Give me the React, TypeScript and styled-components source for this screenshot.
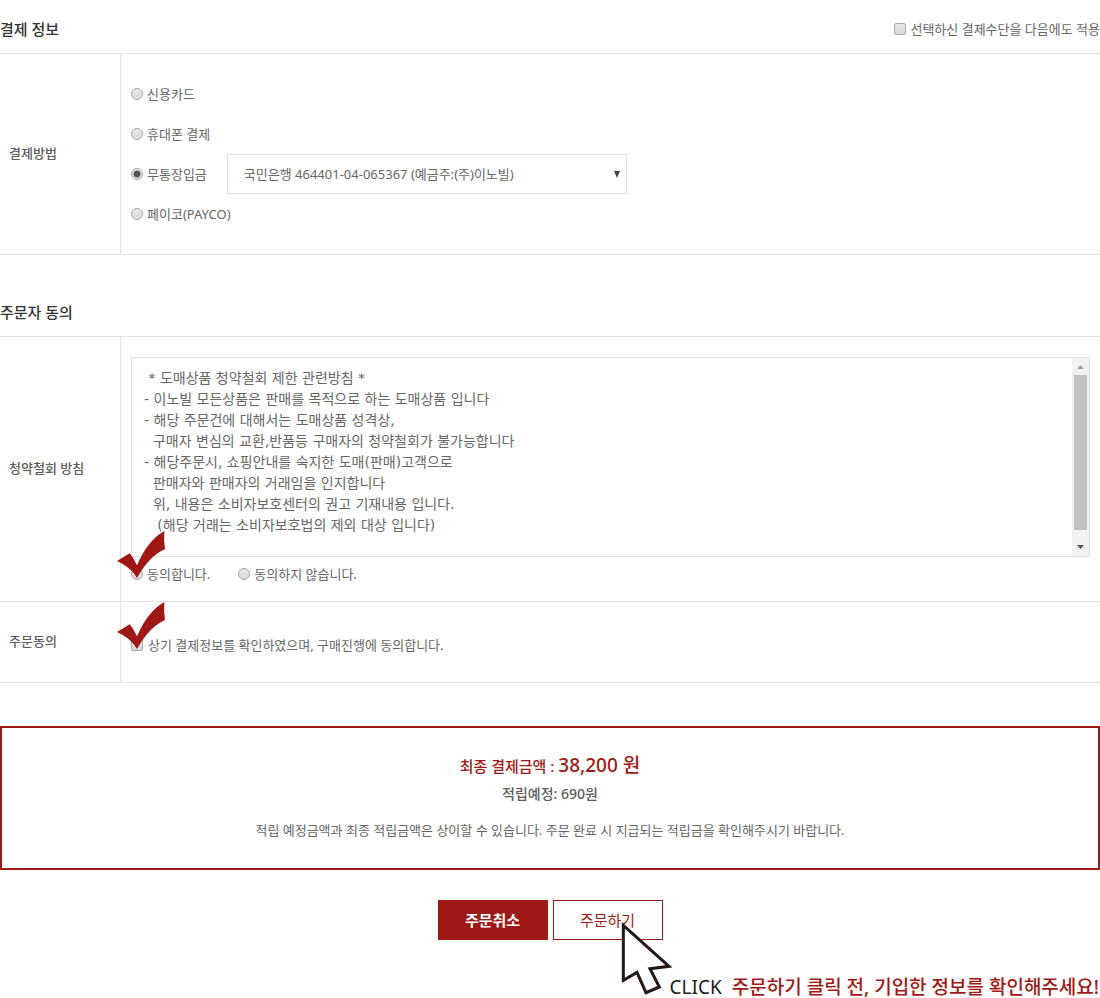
import React from 'react';
import styled, { createGlobalStyle, css } from 'styled-components';

const RED = '#9e1915';
const LINE = '#e2e2e2';

const GlobalStyle = createGlobalStyle`
  *, *::before, *::after { box-sizing: border-box; }
  body {
    margin: 0;
    background: #fff;
    color: #666;
    font: 400 13px/20px "Noto Sans", "Noto Sans CJK KR", sans-serif;
  }
  button, select, textarea { font: inherit; color: inherit; }
`;

const Page = styled.main`
  display: flow-root;
`;

const SectionHeader = styled.header<{ $spaced?: boolean }>`
  display: flex;
  justify-content: space-between;
  align-items: center;
  height: 53px;
  padding-top: 5px;
  margin-top: ${(p) => (p.$spaced ? 28 : 0)}px;
`;

const Title = styled.h2`
  margin: 0;
  font-size: 15px;
  font-weight: 500;
  color: #333;
`;

const FormTable = styled.table`
  width: 100%;
  border-collapse: separate;
  border-spacing: 0;
  border-top: 1px solid ${LINE};
`;

const HeadCell = styled.th`
  width: 121px;
  padding: 0 9px 2px;
  border-right: 1px solid ${LINE};
  border-bottom: 1px solid ${LINE};
  font-weight: 500;
  color: #5c5c5c;
  text-align: left;
`;

const Cell = styled.td<{ $pad: string }>`
  padding: ${(p) => p.$pad};
  border-bottom: 1px solid ${LINE};
`;

const Choice = styled.label<{ $gap?: number }>`
  display: flex;
  align-items: center;
  gap: ${(p) => p.$gap ?? 4}px;
`;

const MarkBox = styled.span`
  position: relative;
  display: flex;
`;

const control = css`
  appearance: none;
  flex: none;
  width: 12px;
  height: 12px;
  margin: 0;
  border: 1px solid #a9a9a9;
  background: linear-gradient(#e8e8e8, #dadada);
`;

const Radio = styled.input.attrs({ type: 'radio' })`
  ${control}
  border-radius: 50%;
  &:checked {
    background: radial-gradient(circle, #555 0 3px, #e4e4e4 4px);
  }
`;

const Checkbox = styled.input.attrs({ type: 'checkbox' })`
  ${control}
  border-radius: 2px;
  &:checked { background: #777; }
`;

const MethodRow = styled.div`
  display: flex;
  align-items: center;
  gap: 20px;
  height: 40px;
`;

const SelectBox = styled.div`
  position: relative;
  width: 400px;
  svg {
    position: absolute;
    right: 7px;
    top: 16px;
    pointer-events: none;
  }
`;

const Select = styled.select`
  appearance: none;
  width: 100%;
  height: 40px;
  padding: 0 16px;
  border: 1px solid ${LINE};
  border-radius: 0;
  background: #fff;
`;

const TermsBox = styled.div`
  display: flex;
  height: 200px;
  border: 1px solid ${LINE};
`;

const Terms = styled.textarea`
  flex: 1;
  padding: 10px 12px;
  border: 0;
  background: #fff;
  font-family: "DejaVu Sans", "Noto Sans CJK KR", sans-serif;
  font-size: 14px;
  line-height: 21px;
  resize: none;
  scrollbar-width: none;
`;

const ScrollBar = styled.div`
  display: flex;
  flex-direction: column;
  align-items: center;
  gap: 6px;
  width: 17px;
  padding: 7px 0;
  background: #f1f1f1;
`;

const ScrollThumb = styled.div`
  width: 13px;
  height: 155px;
  margin-bottom: auto;
  background: #c1c1c1;
`;

const AgreeRow = styled.div`
  display: flex;
  align-items: center;
  gap: 28px;
  height: 34px;
`;

const Summary = styled.section`
  margin-top: 43px;
  padding: 24px 20px 26px;
  border: 2px solid ${RED};
  text-align: center;
  p { margin: 0; }
`;

const Total = styled.p`
  font-size: 15px;
  font-weight: 500;
  line-height: 28px;
  color: ${RED};
  strong { font-size: 19px; font-weight: 500; line-height: 20px; }
`;

const Points = styled.p`
  font-size: 14px;
  font-weight: 500;
  line-height: 28px;
  color: #5c5c5c;
`;

const Note = styled.p`
  padding-top: 10px;
  line-height: 24px;
`;

const Actions = styled.div`
  display: flex;
  justify-content: center;
  gap: 5px;
  margin-top: 30px;
`;

const ButtonBox = styled.div`
  position: relative;
`;

const Button = styled.button<{ $filled?: boolean }>`
  display: block;
  width: 110px;
  height: 40px;
  padding: 0;
  border: 1px solid ${RED};
  background: ${(p) => (p.$filled ? RED : '#fff')};
  color: ${(p) => (p.$filled ? '#fff' : RED)};
  font-size: 15px;
  font-weight: ${(p) => (p.$filled ? 700 : 400)};
`;

const CursorIcon = styled.svg`
  position: absolute;
  left: 67px;
  top: 20px;
  pointer-events: none;
`;

const CheckIcon = styled.svg`
  position: absolute;
  left: -14px;
  top: -37px;
  pointer-events: none;
`;

const Guide = styled.p`
  display: flex;
  justify-content: flex-end;
  gap: 10px;
  margin: 36px 0 0;
  padding-right: 1px;
  font-size: 19px;
  font-weight: 400;
  line-height: 22px;
  color: #231815;
  strong { font-weight: 500; color: ${RED}; }
`;

const CheckMark = () => (
  <CheckIcon width="48" height="47" viewBox="0 0 144 141" aria-hidden="true">
    <path
      d="M0 90L38 67Q50 80 60 103Q91 29 142 0Q140 30 144 54Q96 76 60 141Q42 109 0 90Z"
      fill={RED}
    />
  </CheckIcon>
);

const Cursor = () => (
  <CursorIcon width="52" height="76" viewBox="0 0 156 228" aria-hidden="true">
    <path
      d="M10 16V181L51 157L78 218L118 201L90 146L147 139Z"
      fill="#fff"
      stroke="#231815"
      strokeWidth="9"
    />
  </CursorIcon>
);

const TERMS = [
  ' * 도매상품 청약철회 제한 관련방침 *',
  '- 이노빌 모든상품은 판매를 목적으로 하는 도매상품 입니다',
  '- 해당 주문건에 대해서는 도매상품 성격상,',
  '  구매자 변심의 교환,반품등 구매자의 청약철회가 불가능합니다',
  '- 해당주문시, 쇼핑안내를 숙지한 도매(판매)고객으로',
  '  판매자와 판매자의 거래임을 인지합니다',
  '  위, 내용은 소비자보호센터의 권고 기재내용 입니다.',
  '   (해당 거래는 소비자보호법의 제외 대상 입니다)',
  '',
].join('\n');

const METHODS = ['신용카드', '휴대폰 결제', '무통장입금', '페이코(PAYCO)'];
const BANK_METHOD = '무통장입금';

export default function App() {
  return (
    <Page>
      <GlobalStyle />
      <SectionHeader>
        <Title>결제 정보</Title>
        <Choice>
          <Checkbox />
          선택하신 결제수단을 다음에도 적용
        </Choice>
      </SectionHeader>
      <FormTable>
        <tbody>
          <tr>
            <HeadCell scope="row">결제방법</HeadCell>
            <Cell $pad="20px 10px">
              {METHODS.map((name) => (
                <MethodRow key={name}>
                  <Choice>
                    <Radio name="method" defaultChecked={name === BANK_METHOD} />
                    {name}
                  </Choice>
                  {name === BANK_METHOD && (
                    <SelectBox>
                      <Select aria-label="입금 계좌">
                        <option>국민은행 464401-04-065367 (예금주:(주)이노빌)</option>
                      </Select>
                      <svg width="6" height="8" viewBox="0 0 6 8" aria-hidden="true">
                        <path d="M0 1H6L3 8Z" fill="#444" />
                      </svg>
                    </SelectBox>
                  )}
                </MethodRow>
              ))}
            </Cell>
          </tr>
        </tbody>
      </FormTable>

      <SectionHeader $spaced>
        <Title>주문자 동의</Title>
      </SectionHeader>
      <FormTable>
        <tbody>
          <tr>
            <HeadCell scope="row">청약철회 방침</HeadCell>
            <Cell $pad="20px 10px 10px">
              <TermsBox>
                <Terms readOnly aria-label="청약철회 방침" defaultValue={TERMS} />
                <ScrollBar aria-hidden="true">
                  <svg width="7" height="4" viewBox="0 0 7 4">
                    <path d="M0 4L3.5 0L7 4Z" fill="#a3a3a3" />
                  </svg>
                  <ScrollThumb />
                  <svg width="7" height="4" viewBox="0 0 7 4">
                    <path d="M0 0L3.5 4L7 0Z" fill="#505050" />
                  </svg>
                </ScrollBar>
              </TermsBox>
              <AgreeRow>
                <Choice>
                  <MarkBox>
                    <Radio name="agree" />
                    <CheckMark />
                  </MarkBox>
                  동의합니다.
                </Choice>
                <Choice>
                  <Radio name="agree" />
                  동의하지 않습니다.
                </Choice>
              </AgreeRow>
            </Cell>
          </tr>
          <tr>
            <HeadCell scope="row">주문동의</HeadCell>
            <Cell $pad="33px 10px 27px">
              <Choice $gap={5}>
                <MarkBox>
                  <Checkbox />
                  <CheckMark />
                </MarkBox>
                상기 결제정보를 확인하였으며, 구매진행에 동의합니다.
              </Choice>
            </Cell>
          </tr>
        </tbody>
      </FormTable>

      <Summary>
        <Total>
          최종 결제금액 : <strong>38,200 원</strong>
        </Total>
        <Points>적립예정: 690원</Points>
        <Note>
          적립 예정금액과 최종 적립금액은 상이할 수 있습니다. 주문 완료 시 지급되는 적립금을 확인해주시기 바랍니다.
        </Note>
      </Summary>

      <Actions>
        <Button type="button" $filled>
          주문취소
        </Button>
        <ButtonBox>
          <Button type="button">주문하기</Button>
          <Cursor />
        </ButtonBox>
      </Actions>
      <Guide>
        <span>CLICK</span>
        <strong>주문하기 클릭 전, 기입한 정보를 확인해주세요!</strong>
      </Guide>
    </Page>
  );
}
